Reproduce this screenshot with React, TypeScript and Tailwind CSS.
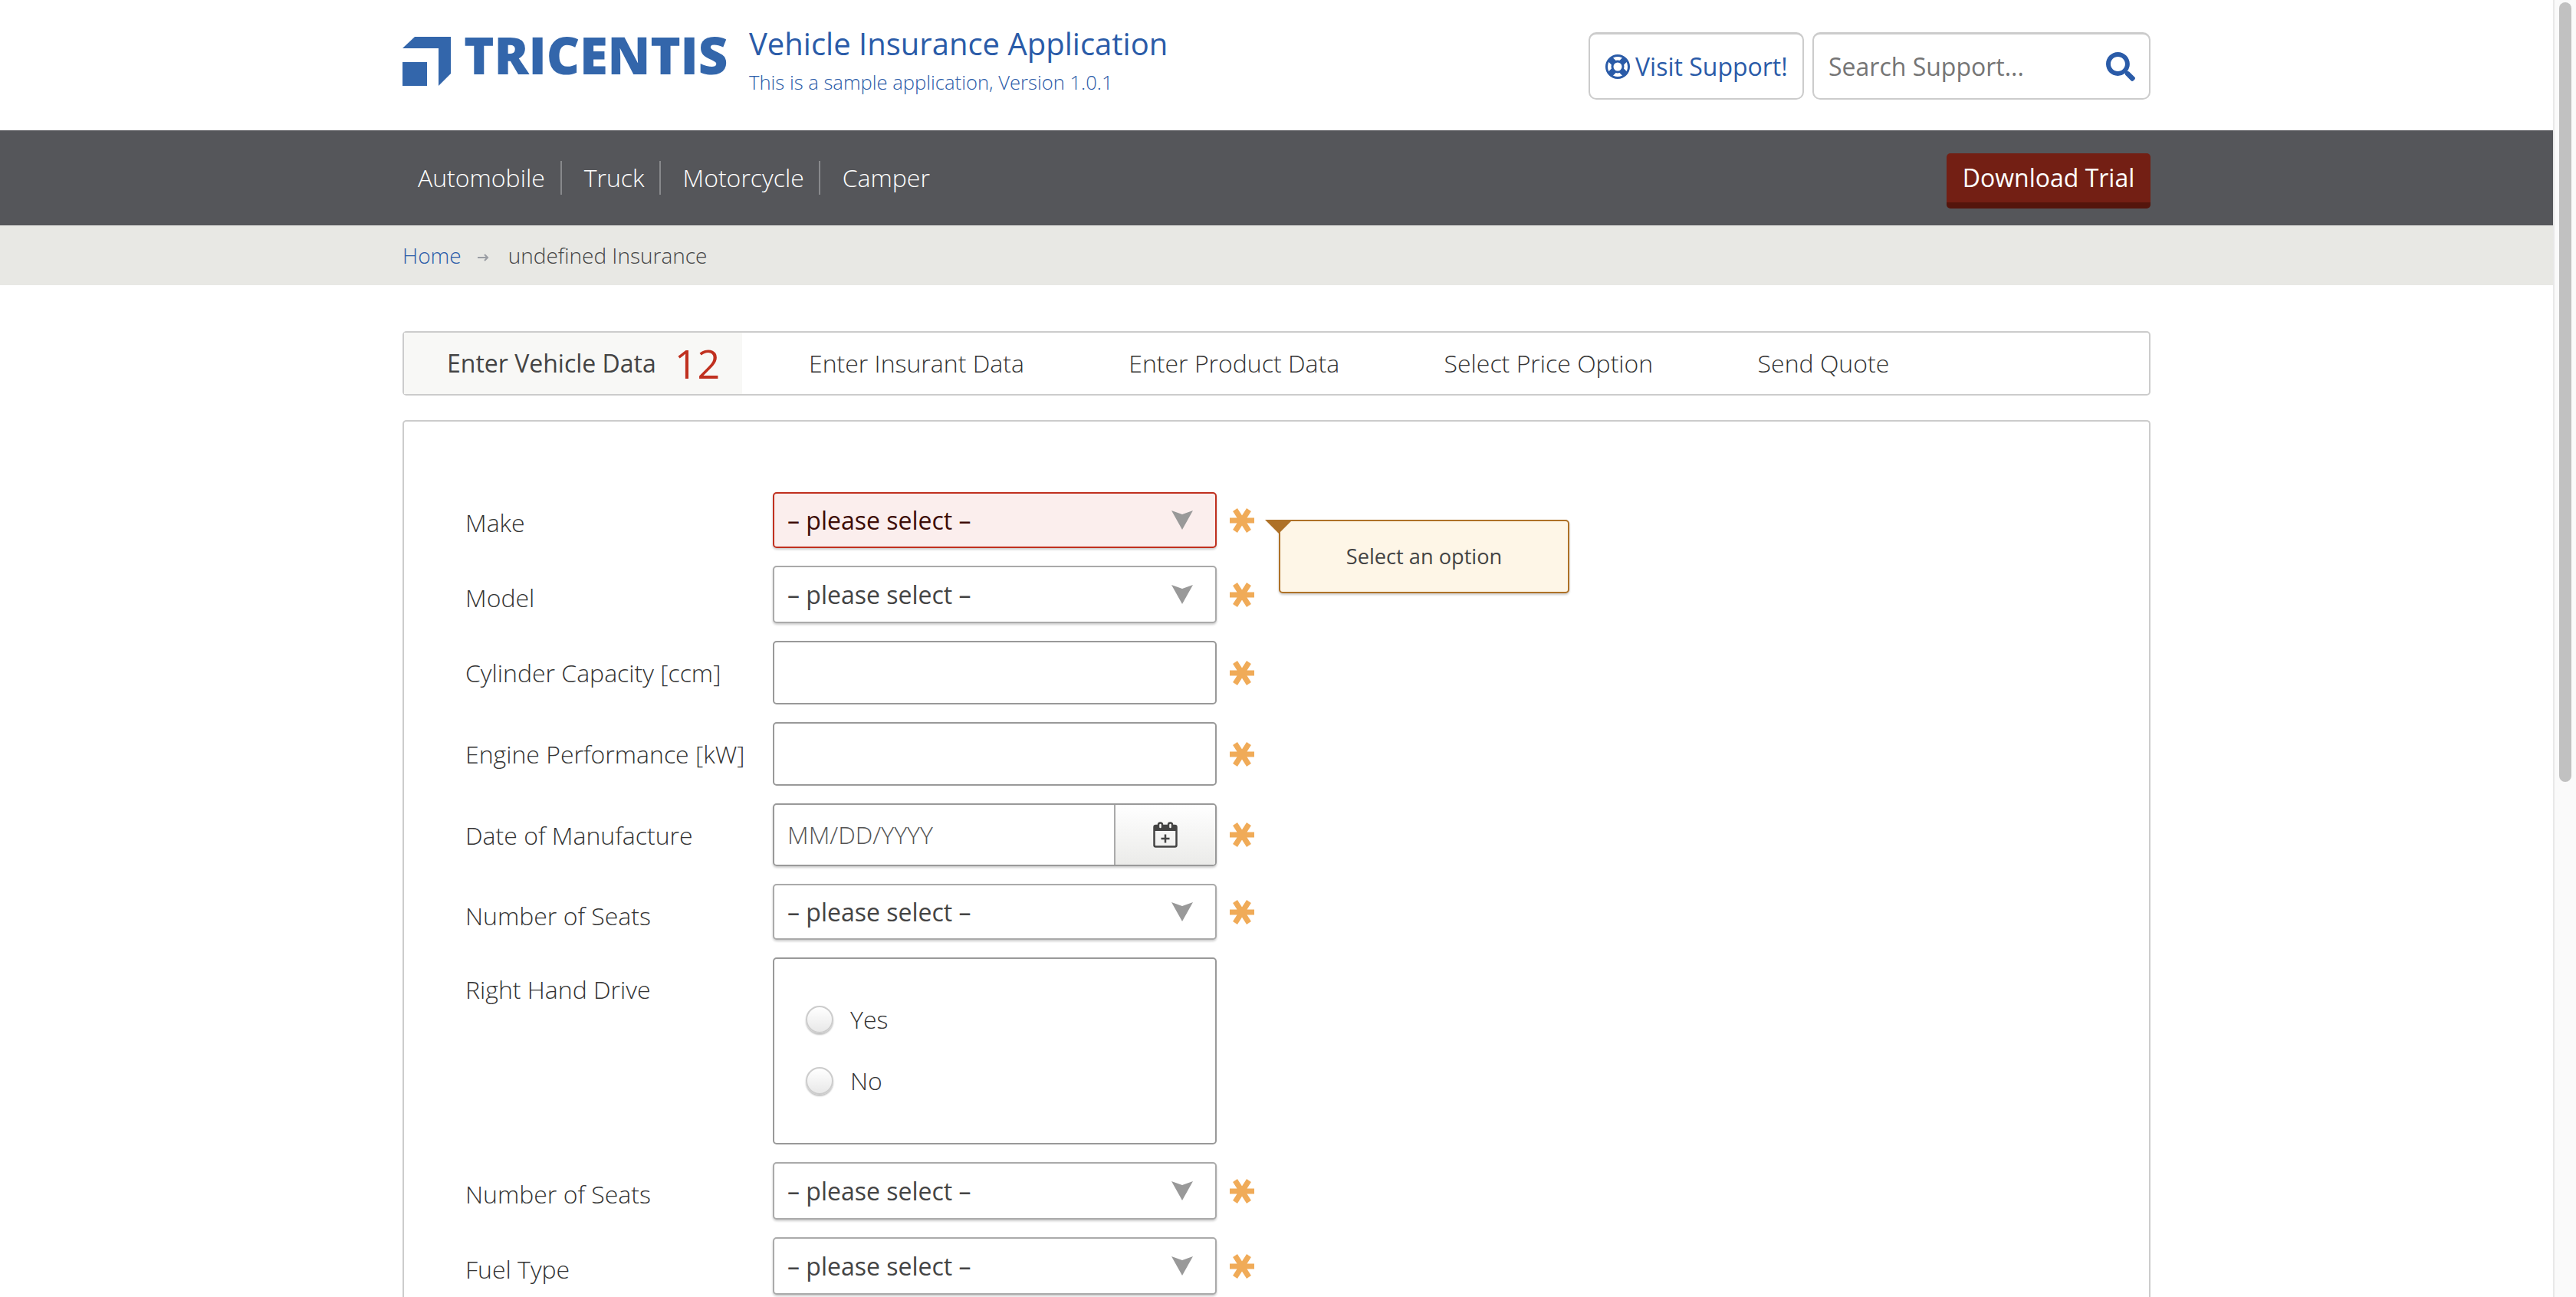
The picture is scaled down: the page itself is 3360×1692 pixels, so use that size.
import { FaSearch } from "react-icons/fa";

const navItems = ["Automobile", "Truck", "Motorcycle", "Camper"];
const otherTabs = ["Enter Insurant Data", "Enter Product Data", "Select Price Option", "Send Quote"];

function Logo() {
  return (
    <div className="flex items-start w-[452px] h-[64px]">
      <svg width="64" height="64" viewBox="0 0 64 64" className="shrink-0 text-[#3366ab]" fill="currentColor">
        <path d="M0 15 16 0h47v48L47 64V15z" />
        <path d="M0 33h32v31H0z" />
      </svg>
      <span className="ml-[16px] text-[67px] leading-[47px] font-extrabold text-[#3366ab] tracking-[-0.2px]">TRICENTIS</span>
    </div>
  );
}

function LifeRing() {
  return (
    <svg width="32" height="32" viewBox="0 0 32 32" fill="none" stroke="currentColor" className="shrink-0">
      <circle cx="16" cy="16" r="14.500" strokeWidth="3" />
      <circle cx="16" cy="16" r="7" strokeWidth="3" />
      <path d="M6 6l5 5M26 6l-5 5M6 26l5-5M26 26l-5-5" strokeWidth="8" />
    </svg>
  );
}

function Required() {
  return (
    <svg width="32" height="32" viewBox="0 0 32 32" className="shrink-0 ml-[17px] text-[#f0ab58]" stroke="currentColor" strokeWidth="7">
      <path d="M0 16h32M7 2l18 28M25 2 7 30" />
    </svg>
  );
}

function Arrow() {
  return (
    <svg width="28" height="25" viewBox="0 0 28 25" className="shrink-0 text-[#999999]" fill="currentColor">
      <path d="M0 0 14 5 28 0 14 25z" />
    </svg>
  );
}

function Label({ children, top = "pt-[20px]" }: { children: string; top?: string }) {
  return <div className={`w-[401px] shrink-0 ${top} leading-[44px] font-light text-[#333333]`}>{children}</div>;
}

function SelectRow({ label, height = "h-[75px]", top, error = false }: { label: string; height?: string; top?: string; error?: boolean }) {
  return (
    <div className="flex">
      <Label top={top}>{label}</Label>
      <div className={`${height} w-[579px] rounded-[5px] border-2 flex items-center justify-between pl-[17px] pr-[29px] shadow-[0_2px_3px_rgba(0,0,0,0.2)] ${error ? "border-[#c0301f] bg-[#fbeeed] text-[#3d0c06]" : "border-[#aaaaaa] bg-white text-[#444444]"}`}>
        <span>– please select –</span>
        <Arrow />
      </div>
      <div className={`${height} flex items-center`}>
        <Required />
      </div>
    </div>
  );
}

function InputRow({ label }: { label: string }) {
  return (
    <div className="flex">
      <Label>{label}</Label>
      <input className="h-[83px] w-[579px] rounded-[5px] border-2 border-[#999999] bg-white outline-none" />
      <div className="h-[83px] flex items-center">
        <Required />
      </div>
    </div>
  );
}

export default function App() {
  return (
    <div className="h-screen flex overflow-hidden bg-white font-['Open_Sans',sans-serif] text-[32px] text-[#333333]">
      <div className="flex-1 min-w-0">
        <header className="h-[170px]">
          <div className="w-[2280px] mx-auto flex justify-between">
            <div className="flex pt-[32px]">
              <div className="pt-[16px]">
                <Logo />
              </div>
              <div>
                <div className="text-[40px] leading-[50px] text-[#2a5ba8]">Vehicle Insurance Application</div>
                <div className="text-[25.6px] leading-[36px] font-light text-[#2a5ba8] mt-[8px]">This is a sample application, Version 1.0.1</div>
              </div>
            </div>
            <div className="flex gap-[11px] pt-[42px]">
              <div className="h-[88px] w-[281px] rounded-[10px] border-2 border-[#cccccc] border-t-[3px] flex items-center pl-[20px] gap-[7px] text-[#2a5ba8]">
                <LifeRing />
                <span>Visit Support!</span>
              </div>
              <div className="h-[88px] w-[441px] rounded-[10px] border-2 border-[#cccccc] border-t-[3px] flex items-center justify-between pl-[19px] pr-[18px]">
                <span className="text-[#757575]">Search Support...</span>
                <FaSearch className="w-[38px] h-[38px] text-[#2a5ba8]" />
              </div>
            </div>
          </div>
        </header>

        <nav className="h-[124px] bg-[#55565a]">
          <div className="w-[2280px] h-full mx-auto flex items-center justify-between">
            <ul className="flex items-center">
              {navItems.map((item, i) => (
                <li key={item} className={`h-[44px] leading-[44px] text-white font-light ${i === 0 ? "pl-[20px] pr-[20px]" : "pl-[29px] pr-[19px]"} ${i < navItems.length - 1 ? "border-r-2 border-[#88898c]" : ""}`}>
                  {item}
                </li>
              ))}
            </ul>
            <button className="mt-[8px] h-[72px] w-[266px] rounded-[5px] bg-[#731f14] border-b-[8px] border-[#54150c] text-white">Download Trial</button>
          </div>
        </nav>

        <div className="h-[78px] bg-[#e8e8e4]">
          <div className="w-[2280px] h-full mx-auto flex items-center text-[28px] font-light">
            <span className="text-[#2a5ba8]">Home</span>
            <svg width="15" height="10" viewBox="0 0 15 10" fill="none" stroke="#9a9da3" strokeWidth="2" className="ml-[21px] mr-[25px] mt-[6px]">
              <path d="M0 5h13M9 1l4 4-4 4" />
            </svg>
            <span className="text-[#444444]">undefined Insurance</span>
          </div>
        </div>

        <main className="w-[2280px] mx-auto pt-[60px]">
          <div className="h-[84px] rounded-[5px] border-2 border-[#cccccc] flex items-stretch">
            <div className="w-[441px] bg-[#f8f8f6] flex items-center pl-[56px] font-medium text-[#444444]">
              <span>Enter Vehicle Data</span>
              <span className="ml-[24px] text-[52px] font-normal text-[#c0301f]">12</span>
            </div>
            <div className="flex items-center pl-[87px] gap-[136.4px] font-light">
              {otherTabs.map((tab) => (
                <span key={tab}>{tab}</span>
              ))}
            </div>
          </div>

          <div className="mt-[32px] rounded-t-[5px] border-2 border-b-0 border-[#cccccc] pt-[92px] pl-[80px] pb-[100px] flex flex-col gap-[23px]">
            <div className="relative">
              <SelectRow label="Make" height="h-[73px]" top="pt-[18px]" error />
              <div className="absolute left-[1061px] top-[36px] w-[379px] h-[96px] rounded-[5px] border-2 border-[#ae7127] bg-[#fef6e7] flex items-center justify-center text-[27.2px] text-[#444444] shadow-[0_2px_3px_rgba(0,0,0,0.2)]">
                <span>Select an option</span>
                <svg width="36" height="18" viewBox="0 0 36 18" className="absolute left-[-20px] top-[-2px] text-[#ae7127]" fill="currentColor">
                  <path d="M0 0h36L18 18z" />
                </svg>
              </div>
            </div>
            <SelectRow label="Model" />
            <InputRow label="Cylinder Capacity [ccm]" />
            <InputRow label="Engine Performance [kW]" />
            <div className="flex">
              <Label>Date of Manufacture</Label>
              <div className="h-[82px] w-[579px] rounded-[5px] border-2 border-[#999999] flex overflow-hidden shadow-[0_2px_3px_rgba(0,0,0,0.2)]">
                <div className="flex-1 flex items-center pl-[17px] font-light text-[#555555]">MM/DD/YYYY</div>
                <div className="w-[132px] border-l-2 border-[#aaaaaa] bg-gradient-to-b from-white to-[#ebebe9] flex items-center justify-center">
                  <svg width="32" height="34" viewBox="0 0 32 34" fill="none" stroke="#444444" strokeWidth="2.5">
                    <rect x="1.500" y="5" width="29" height="27.500" rx="2" />
                    <path d="M1.500 5h29v7h-29z" fill="#444444" stroke="none" />
                    <rect x="7" y="1.500" width="5" height="8" rx="2.500" fill="#f6f6f5" />
                    <rect x="20" y="1.500" width="5" height="8" rx="2.500" fill="#f6f6f5" />
                    <path d="M16 16.500v11M10.500 22h11" />
                  </svg>
                </div>
              </div>
              <div className="h-[82px] flex items-center">
                <Required />
              </div>
            </div>
            <SelectRow label="Number of Seats" height="h-[73px]" />
            <div className="flex">
              <Label>Right Hand Drive</Label>
              <div className="h-[244px] w-[579px] rounded-[5px] border-2 border-[#999999] pt-[60px] pl-[41px] flex flex-col gap-[43px] font-light">
                {["Yes", "No"].map((opt) => (
                  <label key={opt} className="flex items-center gap-[22px] h-[37px]">
                    <span className="w-[36px] h-[36px] rounded-full border-2 border-[#cccccc] bg-gradient-to-b from-white to-[#e8e8e8] shadow-[0_2px_2px_rgba(0,0,0,0.25)]" />
                    <span>{opt}</span>
                  </label>
                ))}
              </div>
            </div>
            <SelectRow label="Number of Seats" />
            <SelectRow label="Fuel Type" />
          </div>
        </main>
      </div>

      <div className="w-[30px] shrink-0 border-l-2 border-[#e8e8e8] bg-[#fafafa] pl-[6px] pt-[3px]">
        <div className="w-[16px] h-[1017px] rounded-full bg-[#c1c1c1]" />
      </div>
    </div>
  );
}
